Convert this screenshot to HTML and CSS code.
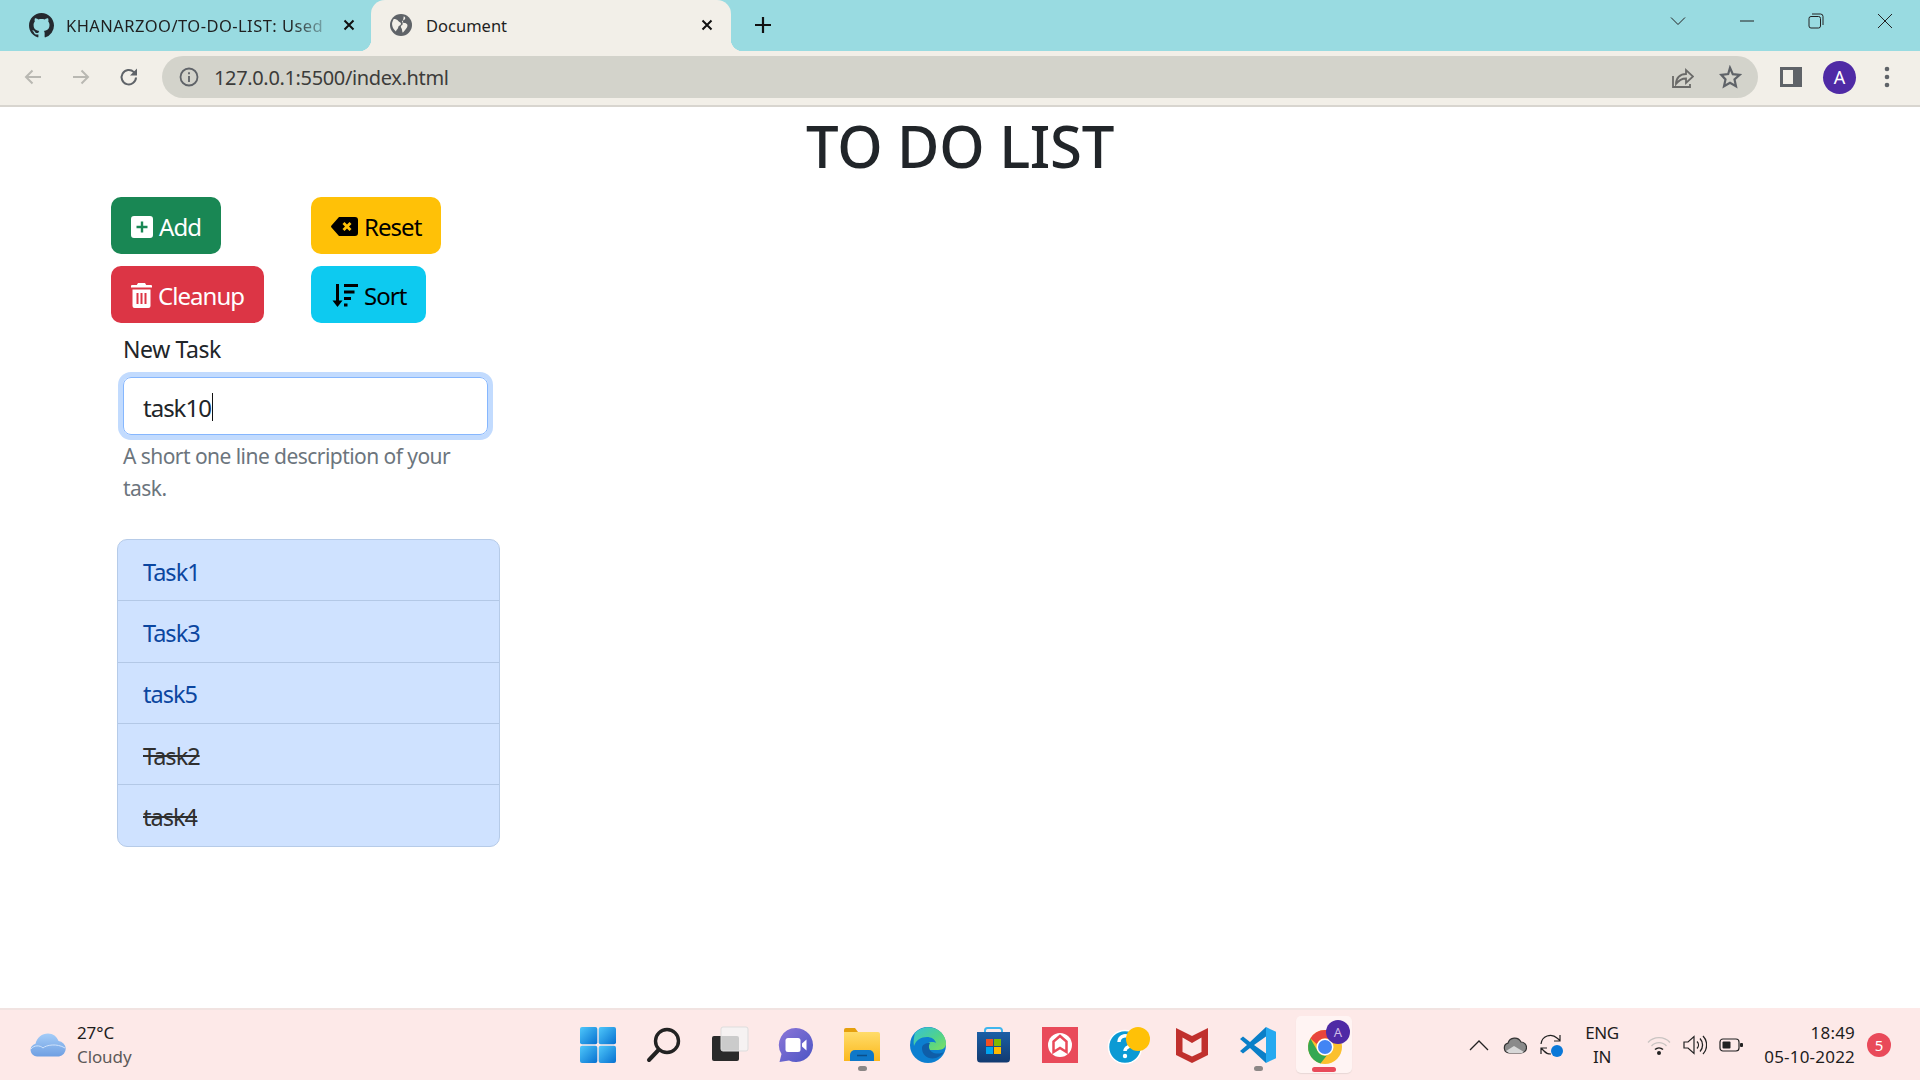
FILE: index.html
```html
<!DOCTYPE html>
<html lang="en">
<head>
<meta charset="utf-8">
<title>Document</title>
<link rel="stylesheet" href="styles.css">
</head>
<body>
<svg class="defs" width="0" height="0" aria-hidden="true">
  <defs>
    <linearGradient id="gWin" x1="0" y1="0" x2="1" y2="1"><stop offset="0" stop-color="#4fc8fb"/><stop offset="1" stop-color="#0670d0"/></linearGradient>
    <linearGradient id="gChat" x1="0" y1="0" x2="1" y2="1"><stop offset="0" stop-color="#8c76d8"/><stop offset="1" stop-color="#4b55c4"/></linearGradient>
    <linearGradient id="gFolder" x1="0" y1="0" x2="0" y2="1"><stop offset="0" stop-color="#ffdc6a"/><stop offset="1" stop-color="#fbb81c"/></linearGradient>
    <linearGradient id="gEdge" x1="0" y1="0" x2="1" y2="1"><stop offset="0" stop-color="#35c1d9"/><stop offset=".55" stop-color="#4fd28e"/><stop offset="1" stop-color="#7fe05f"/></linearGradient>
    <linearGradient id="gStore" x1="0" y1="0" x2="0" y2="1"><stop offset="0" stop-color="#1b5fa6"/><stop offset="1" stop-color="#123a70"/></linearGradient>
    <linearGradient id="gCloud" x1="0" y1="0" x2="0" y2="1"><stop offset="0" stop-color="#a5cdf8"/><stop offset="1" stop-color="#6f9fe2"/></linearGradient>
  </defs>
</svg>

<header class="tabstrip">
  <div class="tab">
    <svg class="favicon" viewBox="0 0 16 16" fill="#24292f"><path d="M8 0C3.58 0 0 3.58 0 8c0 3.54 2.29 6.53 5.47 7.59.4.07.55-.17.55-.38 0-.19-.01-.82-.01-1.49-2.01.37-2.53-.49-2.69-.94-.09-.23-.48-.94-.82-1.13-.28-.15-.68-.52-.01-.53.63-.01 1.08.58 1.23.82.72 1.21 1.87.87 2.33.66.07-.52.28-.87.51-1.07-1.78-.2-3.64-.89-3.64-3.95 0-.87.31-1.59.82-2.15-.08-.2-.36-1.02.08-2.12 0 0 .67-.21 2.2.82.64-.18 1.32-.27 2-.27.68 0 1.36.09 2 .27 1.53-1.04 2.2-.82 2.2-.82.44 1.1.16 1.92.08 2.12.51.56.82 1.27.82 2.15 0 3.07-1.87 3.75-3.65 3.95.29.25.54.73.54 1.48 0 1.07-.01 1.93-.01 2.2 0 .21.15.46.55.38A8.013 8.013 0 0 0 16 8c0-4.42-3.58-8-8-8z"/></svg>
    <span class="tab-title fade">KHANARZOO/TO-DO-LIST: Used</span>
    <svg class="tab-x" viewBox="0 0 12 12"><path d="M1.500 1.500l9 9M10.500 1.500l-9 9"/></svg>
  </div>
  <div class="tab active">
    <svg class="favicon globe" viewBox="0 0 24 24"><circle cx="12" cy="12" r="12" fill="#5f6368"/><path d="M4 5.500c2 0 4 .5 5 2s3 1 3 3-3 2-3 4-2 2-2.500 4.500C3.500 17 1.500 12 2.500 9 3 7.500 3.500 6.500 4 5.500zM15 2.500c2 1 2 2.500 1 3.500s-3 1-3 2.500 3.500 1 5 2 1.500 3-.5 5.500-2.500 3-3.500 4.500c-1-1.500-.5-3.500-1.500-5s-1-3 1-3.500" fill="#f2efe8"/></svg>
    <span class="tab-title">Document</span>
    <svg class="tab-x" viewBox="0 0 12 12"><path d="M1.500 1.500l9 9M10.500 1.500l-9 9"/></svg>
  </div>
  <svg class="newtab" viewBox="0 0 18 18"><path d="M9 1v16M1 9h16"/></svg>
  <div class="winctl">
    <svg viewBox="0 0 16 10" class="ctl ctl-chev"><path d="M1 1.500l7 7 7-7"/></svg>
    <svg viewBox="0 0 16 16" class="ctl"><path d="M1 8h14"/></svg>
    <svg viewBox="0 0 16 16" class="ctl"><rect x="1" y="3.500" width="11.500" height="11.500" rx="2"/><path d="M4 1h8.500A2.500 2.500 0 0 1 15 3.500V12"/></svg>
    <svg viewBox="0 0 16 16" class="ctl"><path d="M1 1l14 14M15 1L1 15"/></svg>
  </div>
</header>

<nav class="toolbar">
  <svg class="nav-ic dim" viewBox="0 0 20 20"><path d="M18 10H3M9.500 3.500L3 10l6.500 6.500"/></svg>
  <svg class="nav-ic dim" viewBox="0 0 20 20"><path d="M2 10h15M10.500 3.500L17 10l-6.500 6.500"/></svg>
  <svg class="nav-ic" viewBox="0 0 20 20"><path d="M17 10.500a7.200 7.200 0 1 1-2.100-5.400L17 7"/><path class="fillic" d="M18 1.500v7h-7z"/></svg>
  <div class="omnibox">
    <svg class="info" viewBox="0 0 20 20"><circle cx="10" cy="10" r="8.500"/><path d="M10 9v6M10 5.200v2"/></svg>
    <span class="url">127.0.0.1:5500/index.html</span>
    <svg class="omni-ic" viewBox="0 0 24 24"><path d="M3 11v11h17v-3"/><path d="M6 19c0-6 4-10 10-10V5l7 6.500-7 6.500v-4.500c-4 0-7 1.500-10 5.500z"/></svg>
    <svg class="omni-ic star" viewBox="0 0 24 24"><path d="M12 2.800l2.800 6.300 6.900.7-5.200 4.600 1.500 6.800-6-3.500-6 3.500 1.500-6.800L3.300 9.800l6.900-.7z"/></svg>
  </div>
  <svg class="panel" viewBox="0 0 22 22"><rect x="1.500" y="2.500" width="19" height="17" fill="none" stroke="#5f6368" stroke-width="3"/><rect x="13" y="2.500" width="8" height="17" fill="#5f6368"/></svg>
  <div class="avatar">A</div>
  <svg class="dots" viewBox="0 0 6 22"><circle cx="3" cy="3" r="2.300"/><circle cx="3" cy="11" r="2.300"/><circle cx="3" cy="19" r="2.300"/></svg>
</nav>

<main class="page">
  <h1 class="title">TO DO LIST</h1>
  <div class="actions">
    <button class="btn btn-add">
      <svg class="btn-ic" width="22" height="22" viewBox="0 0 22 22"><path fill-rule="evenodd" d="M3 0h16a3 3 0 0 1 3 3v16a3 3 0 0 1-3 3H3a3 3 0 0 1-3-3V3a3 3 0 0 1 3-3zm6.800 5.500v4.300H5.500v2.400h4.300v4.300h2.400v-4.300h4.300V9.800h-4.300V5.500z"/></svg>
      Add
    </button>
    <button class="btn btn-reset">
      <svg class="btn-ic" width="27" height="19" viewBox="0 0 27 19"><path fill-rule="evenodd" d="M8 0h16a3 3 0 0 1 3 3v13a3 3 0 0 1-3 3H8L.5 10.500a1.500 1.500 0 0 1 0-2zm5.500 5l-2 2 2.500 2.500-2.500 2.500 2 2 2.500-2.500 2.500 2.500 2-2-2.500-2.500 2.500-2.500-2-2-2.500 2.500z"/></svg>
      Reset
    </button>
    <button class="btn btn-clean">
      <svg class="btn-ic" width="21" height="25" viewBox="0 0 21 25"><path fill-rule="evenodd" d="M7 0h7l1.200 2H20a1 1 0 0 1 1 1v1.500H0V3a1 1 0 0 1 1-1h4.800zM1.500 6.500h18V23a2 2 0 0 1-2 2h-14a2 2 0 0 1-2-2zM5.500 10v11h2V10zm4 0v11h2V10zm4 0v11h2V10z"/></svg>
      Cleanup
    </button>
    <button class="btn btn-sort">
      <svg class="btn-ic" width="27" height="23" viewBox="0 0 27 23"><path d="M5 0h3v16.500h3.500L6.500 23 1.500 16.500H5zM13 0h14v3H13zM13 6.500h10.500v3H13zM13 13h7v3h-7zM13 19.500h3.500v3H13z"/></svg>
      Sort
    </button>
  </div>
  <form class="task-form">
    <label class="field-label">New Task</label>
    <div class="input"><span>task10</span><i class="caret"></i></div>
    <p class="help">A short one line description of your task.</p>
  </form>
  <ul class="tasks">
    <li class="task">Task1</li>
    <li class="task">Task3</li>
    <li class="task">task5</li>
    <li class="task done">Task2</li>
    <li class="task done">task4</li>
  </ul>
</main>

<footer class="taskbar">
  <div class="edge"></div>
  <div class="bar">
    <div class="weather">
      <svg class="cloud" viewBox="0 0 36 24"><path fill="url(#gCloud)" d="M7 23.500a6.500 6.500 0 0 1-1.500-12.800C7 4.500 12 .5 18 .5c5 0 9 3 10.500 7.500A7.800 7.800 0 0 1 29 23.500z"/><path d="M1 16c3-4 9-4 12-1 3-3 14-5 22 0" fill="none" stroke="#cfe2fb" stroke-width="1"/></svg>
      <div class="wx-text"><span class="temp">27°C</span><span class="cond">Cloudy</span></div>
    </div>
    <div class="apps">
      <div class="app"><svg viewBox="0 0 36 36"><g fill="url(#gWin)"><rect width="17.300" height="17.300" rx="2"/><rect x="18.700" width="17.300" height="17.300" rx="2"/><rect y="18.700" width="17.300" height="17.300" rx="2"/><rect x="18.700" y="18.700" width="17.300" height="17.300" rx="2"/></g></svg></div>
      <div class="app"><svg viewBox="0 0 36 36"><circle cx="21" cy="14" r="11.500" fill="none" stroke="#222" stroke-width="3.400"/><path d="M12.500 23L3 33" stroke="#222" stroke-width="4" stroke-linecap="round"/></svg></div>
      <div class="app"><svg viewBox="0 0 36 36"><rect x="0" y="9" width="27" height="25" rx="2" fill="#2a2a2a"/><rect x="9" y="0" width="27" height="24" rx="2" fill="#f4f4f4" fill-opacity=".8" stroke="#ddd"/></svg></div>
      <div class="app"><svg viewBox="0 0 36 36"><path fill="url(#gChat)" d="M18 1a17 17 0 1 1-7 32.500L1.500 35l2-8A17 17 0 0 1 18 1z"/><rect x="7.500" y="11" width="15" height="14" rx="2.500" fill="#fff"/><path d="M24 16.500l4.500-4v11l-4.500-4z" fill="#fff"/></svg></div>
      <div class="app has-dot"><svg viewBox="0 0 36 36"><path d="M0 3a2 2 0 0 1 2-2h9l3 4H0z" fill="#e5a00d"/><path d="M0 5h34a2 2 0 0 1 2 2v27H0z" fill="url(#gFolder)"/><path d="M6 34v-6a5 5 0 0 1 5-5h14a5 5 0 0 1 5 5v6z" fill="#0f78c8"/><path d="M13 28.500h10" stroke="#0b4f8a" stroke-width="1.500"/></svg><i class="run-dot"></i></div>
      <div class="app"><svg viewBox="0 0 36 36"><circle cx="18" cy="18" r="18" fill="#0c7fd0"/><path d="M5 6C10 0 20-2 28 3c5 3 8 8 8 14 0 3-3 6-8 6H19c-2 0-3-1-3-3 0-3 3-5 6-5 2 0 3 0 4 1-1-4-5-6-9-6-6 0-11 3-13 9-1-5 0-9 1-13z" fill="url(#gEdge)"/><path d="M12 21c0 7 6 12 14 10 3-1 6-3 8-6-4 2-9 2-12 0-3-2-4-6-2-9-5 0-8 2-8 5z" fill="#0f5ea8"/></svg></div>
      <div class="app"><svg viewBox="0 0 36 36"><path d="M9 8V3.500A2.500 2.500 0 0 1 11.500 1h12A2.500 2.500 0 0 1 26 3.500V8" fill="none" stroke="#3fb6ee" stroke-width="2"/><path d="M1 5h33v27a3.500 3.500 0 0 1-3.500 3.500h-26A3.500 3.500 0 0 1 1 32z" fill="url(#gStore)"/><rect x="10" y="12" width="7" height="7" fill="#f25022"/><rect x="18" y="12" width="7" height="7" fill="#7fba00"/><rect x="10" y="20" width="7" height="7" fill="#00a4ef"/><rect x="18" y="20" width="7" height="7" fill="#ffb900"/></svg></div>
      <div class="app"><svg viewBox="0 0 36 36"><rect width="36" height="36" fill="#e94a5a"/><circle cx="18" cy="18" r="12" fill="#fff"/><path d="M11.500 25V14.500L18 9l6.500 5.500V25l-6.500-4z" fill="none" stroke="#e94a5a" stroke-width="2.500"/></svg></div>
      <div class="app"><svg viewBox="0 0 36 36"><circle cx="17" cy="20" r="16.500" fill="#0b9ad4" stroke="#fff" stroke-width="1.500"/><path d="M11 15a6 6 0 1 1 9 5c-2 1-3 2-3 4" fill="none" stroke="#fff" stroke-width="3.500"/><circle cx="17" cy="29" r="2.200" fill="#fff"/><circle cx="30" cy="12" r="12" fill="#ffc107"/></svg></div>
      <div class="app"><svg viewBox="0 0 36 36"><path fill-rule="evenodd" d="M2 1l16 8 16-8v27L18 36 2 28zm6.500 9.500v14.500L18 29.500l9.500-4.500V10.500L18 16z" fill="#c0302d"/></svg></div>
      <div class="app has-dot"><svg viewBox="0 0 36 36"><path d="M26 0v9.500L14 18l12 8.500V36L10 21l-7 5.500L0 24l7-6-7-6 3-2.500L10 15z" fill="#0a7fc8"/><path d="M26 0l10 4.800v26.400L26 36z" fill="#25a9f0"/></svg><i class="run-dot"></i></div>
      <div class="app active-app"><svg viewBox="0 0 36 36"><circle cx="19" cy="20" r="17" fill="#fbc02d"/><path d="M19 3a17 17 0 0 1 14.700 8.500H19a8.500 8.500 0 0 0-8 5.700L4.400 11.500A17 17 0 0 1 19 3z" fill="#e8453c"/><path d="M4.400 11.500L12 24.800a8.500 8.500 0 0 0 8.800 3.700L14.500 36.500A17 17 0 0 1 4.400 11.500z" fill="#34a853"/><circle cx="19" cy="20" r="8.500" fill="#fff"/><circle cx="19" cy="20" r="7" fill="#4285f4"/></svg><i class="chrome-badge">A</i><i class="run-bar"></i></div>
    </div>
    <div class="tray">
      <svg class="tray-ic" viewBox="0 0 24 24"><path d="M3 17l9-9 9 9" fill="none" stroke="#222" stroke-width="1.300"/></svg>
      <svg class="tray-ic" viewBox="0 0 24 24"><path d="M6 20a5 5 0 0 1-1-9.800A7 7 0 0 1 18 9a5.500 5.500 0 0 1 0 11z" fill="#8a8a8a" stroke="#333" stroke-width="1.200"/><path d="M3 18l8-5 10 6-2 1H6z" fill="#d7d7d7"/></svg>
      <svg class="tray-ic" viewBox="0 0 24 24"><path d="M2 11a9.500 9.500 0 0 1 16-6l3 2.500M21 2v6h-6M2 21v-6h6M2 15l3 3a9 9 0 0 0 7 3" fill="none" stroke="#222" stroke-width="1.200"/><circle cx="18" cy="18" r="6" fill="#0a78d8"/></svg>
      <div class="lang"><span>ENG</span><span>IN</span></div>
      <svg class="tray-ic" viewBox="0 0 24 24"><path d="M1 9.500a15 15 0 0 1 22 0M4.500 13a10 10 0 0 1 15 0" fill="none" stroke="#c9c4c2" stroke-width="1.300"/><path d="M8 16.500a6 6 0 0 1 8 0" fill="none" stroke="#222" stroke-width="1.600"/><circle cx="12" cy="20" r="2" fill="#222"/></svg>
      <svg class="tray-ic" viewBox="0 0 24 24"><path d="M1 9h4l6-5.500v17L5 15H1z" fill="none" stroke="#222" stroke-width="1.200"/><path d="M14 8.500a5 5 0 0 1 0 7M17 5.500a9.500 9.500 0 0 1 0 13M20 3a13 13 0 0 1 0 18" fill="none" stroke="#222" stroke-width="1.300"/></svg>
      <svg class="tray-ic" viewBox="0 0 24 24"><rect x="1" y="6" width="19" height="12" rx="3" fill="none" stroke="#222" stroke-width="1.200"/><rect x="3.500" y="8.500" width="8" height="7" rx="1" fill="#222"/><rect x="21" y="10" width="3" height="4" rx="1" fill="#222"/></svg>
      <div class="clock"><span>18:49</span><span>05-10-2022</span></div>
      <div class="notif">5</div>
    </div>
  </div>
</footer>
</body>
</html>
```

FILE: styles.css
```css
* { box-sizing: border-box; }
html, body { margin: 0; height: 100%; }
body {
  width: 1920px;
  height: 1080px;
  overflow: hidden;
  display: flex;
  flex-direction: column;
  font-family: "Noto Sans", "Open Sans", sans-serif;
  color: #212529;
  background: #fff;
}
.defs { position: absolute; }

/* Browser tab strip */
.tabstrip {
  flex: 0 0 51px;
  display: flex;
  align-items: stretch;
  background: #99dbe1;
  padding-left: 8px;
}
.tab {
  width: 363px;
  display: flex;
  align-items: center;
  padding: 0 16px 1px 21px;
  font-size: 16.500px;
  color: #1f1f1f;
}
.tab.active {
  width: 360px;
  background: #f2efe8;
  border-radius: 14px 14px 0 0;
  padding: 0 18px 1px 19px;
  position: relative;
}
.tab.active::before, .tab.active::after {
  content: "";
  position: absolute;
  bottom: 0;
  width: 12px;
  height: 12px;
}
.tab.active::before { left: -12px; background: radial-gradient(circle at 0 0, transparent 12px, #f2efe8 12.500px); }
.tab.active::after { right: -12px; background: radial-gradient(circle at 100% 0, transparent 12px, #f2efe8 12.500px); }
.favicon { width: 25px; height: 25px; flex: none; }
.globe { width: 22px; height: 22px; }
.tab-title {
  flex: 1;
  margin-left: 12px;
  white-space: nowrap;
}
.active .tab-title { margin-left: 14px; }
.fade {
  letter-spacing: .45px;
  -webkit-mask-image: linear-gradient(to right, #000 86%, rgba(0,0,0,.25) 99%);
  mask-image: linear-gradient(to right, #000 86%, rgba(0,0,0,.25) 99%);
}
.tab-x { width: 12px; height: 12px; flex: none; margin-left: 16px; }
.tab-x path { stroke: #111; stroke-width: 2; fill: none; }
.newtab { width: 18px; height: 18px; align-self: center; margin-left: 23px; margin-bottom: 1px; }
.newtab path { stroke: #111; stroke-width: 2.200; fill: none; }
.winctl {
  margin-left: auto;
  display: flex;
  align-items: center;
  gap: 53px;
  padding: 0 27px 9px 0;
}
.ctl { width: 16px; height: 16px; fill: none; stroke: #222; stroke-width: 1; }
.ctl-chev { height: 10px; }

/* Browser toolbar */
.toolbar {
  flex: 0 0 56px;
  display: flex;
  align-items: center;
  background: #f2efe8;
  border-bottom: 2px solid #d8d5cf;
  padding: 0 24px 2px 23px;
}
.nav-ic { width: 20px; height: 20px; fill: none; stroke: #5f6368; stroke-width: 2; margin-right: 28px; flex: none; }
.nav-ic.dim { stroke: #b9b8b2; }
.nav-ic:nth-child(3) { margin-right: 23px; }
.fillic { fill: #5f6368; stroke: none; }
.omnibox {
  flex: 0 0 1596px;
  height: 42px;
  background: #d3d3cb;
  border-radius: 21px;
  display: flex;
  align-items: center;
  padding: 0 16px 0 17px;
}
.info { width: 20px; height: 20px; fill: none; stroke: #5f6368; stroke-width: 1.800; flex: none; }
.url { margin-left: 15px; padding-top: 1px; font-size: 20px; letter-spacing: -.35px; color: #3c3c3a; flex: 1; }
.omni-ic { width: 24px; height: 24px; fill: none; stroke: #6a6a68; stroke-width: 1.800; margin-left: 24px; flex: none; }
.star { stroke: #5f6368; stroke-width: 2.200; }
.panel { width: 22px; height: 22px; flex: none; margin-left: 22px; }
.avatar {
  width: 33px;
  height: 33px;
  flex: none;
  margin-left: 21px;
  border-radius: 50%;
  background: #4f2aa5;
  color: #fff;
  font-size: 18px;
  display: flex;
  align-items: center;
  justify-content: center;
}
.dots { width: 6px; height: 22px; fill: #5f6368; flex: none; margin-left: 28px; }

/* Page */
.page { flex: 1; padding-top: 9px; min-height: 0; }
.title {
  margin: 0 0 21px;
  text-align: center;
  font-size: 58px;
  font-weight: 500;
  line-height: 60px;
  letter-spacing: -.3px;
}
.actions {
  margin-left: 111px;
  display: grid;
  grid-template-columns: 200px auto;
  row-gap: 12px;
  justify-items: start;
}
.btn {
  height: 57px;
  display: inline-flex;
  align-items: center;
  gap: 6px;
  padding: 2px 20px 0;
  border: 0;
  border-radius: 10px;
  font-family: inherit;
  font-size: 24px;
  letter-spacing: -.95px;
}
.btn-ic { flex: none; fill: currentColor; }
.btn-add { background: #198754; color: #fff; }
.btn-reset { background: #ffc107; color: #000; }
.btn-clean { background: #dc3545; color: #fff; }
.btn-sort { background: #0dcaf0; color: #000; }
.task-form { margin: 11px 0 0 123px; width: 365px; }
.field-label { display: block; font-size: 23px; line-height: 30px; letter-spacing: -.4px; color: #212529; }
.input {
  margin-top: 13px;
  height: 58px;
  border: 1px solid #86b7fe;
  border-radius: 8px;
  box-shadow: 0 0 0 5px #c2dbfe;
  padding: 2px 19px 0;
  display: flex;
  align-items: center;
  font-size: 24px;
  letter-spacing: -1px;
}
.caret { width: 1px; height: 28px; background: #111; margin-left: 1px; }
.help {
  margin: 5px 0 0;
  font-size: 21px;
  line-height: 32px;
  color: #6c757d;
  letter-spacing: -.55px;
}
.tasks {
  list-style: none;
  margin: 35px 0 0 117px;
  padding: 0;
  width: 383px;
  border: 1px solid #b6cbe8;
  border-radius: 10px;
  background: #cfe2ff;
  overflow: hidden;
}
.task {
  height: 61.300px;
  padding: 3px 0 0 25px;
  display: flex;
  align-items: center;
  font-size: 23.500px;
  letter-spacing: -1px;
  color: #0b46a0;
  border-bottom: 1px solid #b3c8e6;
}
.task:last-child { border-bottom: 0; }
.done { color: #2f2f2f; text-decoration: line-through; }

/* Windows taskbar */
.taskbar { flex: 0 0 72px; background: #fde9e8; display: flex; flex-direction: column; }
.edge { height: 2px; width: 1460px; background: #f1e3e1; flex: none; }
.bar {
  flex: 1;
  display: grid;
  grid-template-columns: 1fr auto 1fr;
  align-items: center;
}
.weather { display: flex; align-items: center; padding-left: 30px; }
.cloud { width: 36px; height: 24px; flex: none; }
.wx-text { display: flex; flex-direction: column; margin-left: 11px; font-size: 17px; line-height: 24px; letter-spacing: -.1px; }
.temp { color: #1d1d1d; }
.cond { color: #5d5a59; }
.apps { display: flex; gap: 30px; margin-left: 2px; }
.app { width: 36px; height: 36px; position: relative; }
.app > svg { display: block; width: 36px; height: 36px; overflow: visible; }
.run-dot {
  position: absolute;
  left: 14px;
  bottom: -8px;
  width: 9px;
  height: 5px;
  border-radius: 3px;
  background: #8c8786;
}
.active-app::before {
  content: "";
  position: absolute;
  left: -10px;
  top: -11px;
  width: 56px;
  height: 57px;
  background: #fff4f3;
  border-radius: 5px;
  box-shadow: 0 1px 1px #e8d8d6;
}
.active-app > svg { position: relative; }
.chrome-badge {
  position: absolute;
  right: -8px;
  top: -7px;
  width: 24px;
  height: 24px;
  border-radius: 50%;
  background: #4f2aa5;
  color: #cdbbe8;
  font-size: 13px;
  font-style: normal;
  display: flex;
  align-items: center;
  justify-content: center;
}
.run-bar {
  position: absolute;
  left: 6px;
  bottom: -9px;
  width: 24px;
  height: 5px;
  border-radius: 3px;
  background: #e94a5a;
}
.tray {
  display: flex;
  align-items: center;
  justify-content: flex-end;
  gap: 12px;
  padding-right: 29px;
  font-size: 17px;
  color: #1d1d1d;
}
.tray-ic { width: 24px; height: 24px; flex: none; }
.lang { display: flex; flex-direction: column; align-items: center; width: 40px; margin: 0 13px 0 7px; line-height: 24px; letter-spacing: -.4px; }
.clock { display: flex; flex-direction: column; align-items: flex-end; width: 100px; line-height: 24px; letter-spacing: .2px; }
.notif {
  width: 24px;
  height: 24px;
  border-radius: 50%;
  background: #e94a5a;
  color: #fff;
  font-size: 15px;
  display: flex;
  align-items: center;
  justify-content: center;
}
```
